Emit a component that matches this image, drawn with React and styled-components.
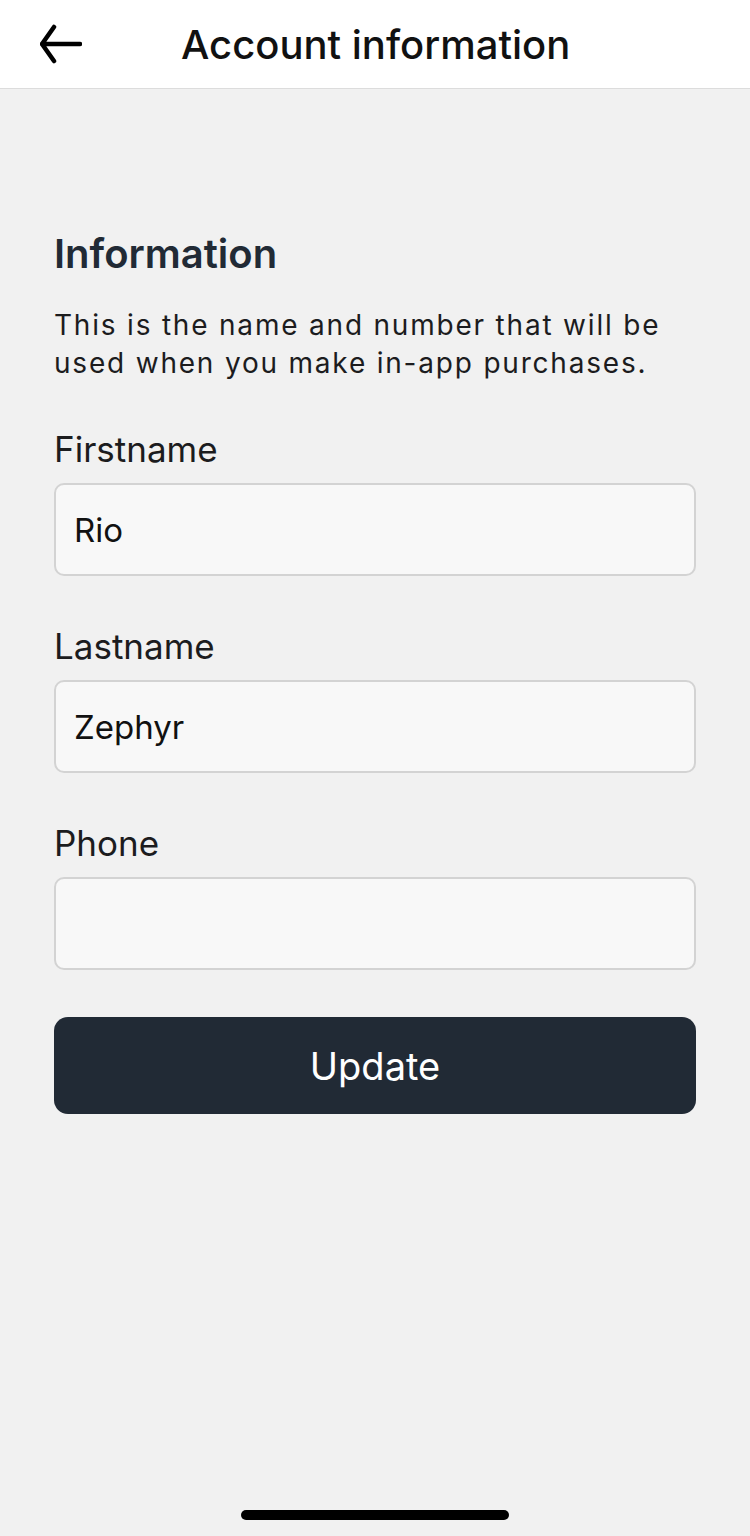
import React from "react"
import styled, { createGlobalStyle } from "styled-components"

const GlobalStyle = createGlobalStyle`
  html, body {
    margin: 0;
    padding: 0;
    background-color: #f1f1f1;
    font-family: Inter, "Noto Sans", "Liberation Sans", sans-serif;
  }
`

const Screen = styled.div`
  display: flex;
  flex-direction: column;
  width: 750px;
  height: 1536px;
  background-color: #f1f1f1;
`

const Header = styled.header`
  display: flex;
  align-items: center;
  height: 88px;
  padding: 0 40px;
  background-color: #ffffff;
  border-bottom: 1px solid #dcdcdc;
`

const BackButton = styled.button`
  display: flex;
  align-items: center;
  justify-content: center;
  width: 42px;
  height: 42px;
  padding: 0;
  border: none;
  background: none;
  cursor: pointer;
`

const Title = styled.h1`
  margin: 0 0 0 99px;
  color: #111111;
  font-size: 40px;
  font-weight: 500;
`

const Content = styled.main`
  display: flex;
  flex-direction: column;
  flex: 1;
  padding: 141px 54px 0;
`

const Heading = styled.h2`
  margin: 0 0 28px;
  color: #212a35;
  font-size: 40px;
  font-weight: 600;
  line-height: 48px;
`

const Description = styled.p`
  margin: 0 0 45px;
  color: #1c1c1e;
  font-size: 28px;
  line-height: 38px;
  letter-spacing: 1.8px;
`

const Fields = styled.div`
  display: flex;
  flex-direction: column;
  gap: 48px;
`

const Field = styled.div`
  display: flex;
  flex-direction: column;
  gap: 12px;
`

const Label = styled.label`
  color: #1c1c1e;
  font-size: 35px;
  line-height: 44px;
`

const Input = styled.input`
  box-sizing: border-box;
  height: 93px;
  padding: 0 18px;
  border: 2px solid #d3d3d3;
  border-radius: 10px;
  background-color: #f8f8f8;
  color: #111111;
  font-family: inherit;
  font-size: 33px;
  outline: none;
`

const UpdateButton = styled.button`
  height: 97px;
  margin-top: 47px;
  border: none;
  border-radius: 14px;
  background-color: #212a35;
  color: #ffffff;
  font-family: inherit;
  font-size: 38px;
  cursor: pointer;
`

const HomeBar = styled.div`
  align-self: center;
  width: 268px;
  height: 10px;
  margin-bottom: 16px;
  border-radius: 5px;
  background-color: #000000;
`

function App() {
  return (
    <Screen>
      <GlobalStyle />
      <Header>
        <BackButton aria-label="Back">
          <svg width="42" height="40" viewBox="0 0 42 40" fill="none">
            <path
              d="M2 20 H40 M14 3 L2 20 L14 37"
              stroke="#000"
              strokeWidth="4.5"
              strokeLinecap="round"
              strokeLinejoin="round"
            />
          </svg>
        </BackButton>
        <Title>Account information</Title>
      </Header>
      <Content>
        <Heading>Information</Heading>
        <Description>
          This is the name and number that will be used when you make in-app
          purchases.
        </Description>
        <Fields>
          <Field>
            <Label>Firstname</Label>
            <Input defaultValue="Rio" />
          </Field>
          <Field>
            <Label>Lastname</Label>
            <Input defaultValue="Zephyr" />
          </Field>
          <Field>
            <Label>Phone</Label>
            <Input defaultValue="" />
          </Field>
        </Fields>
        <UpdateButton>Update</UpdateButton>
      </Content>
      <HomeBar />
    </Screen>
  )
}

export default App
